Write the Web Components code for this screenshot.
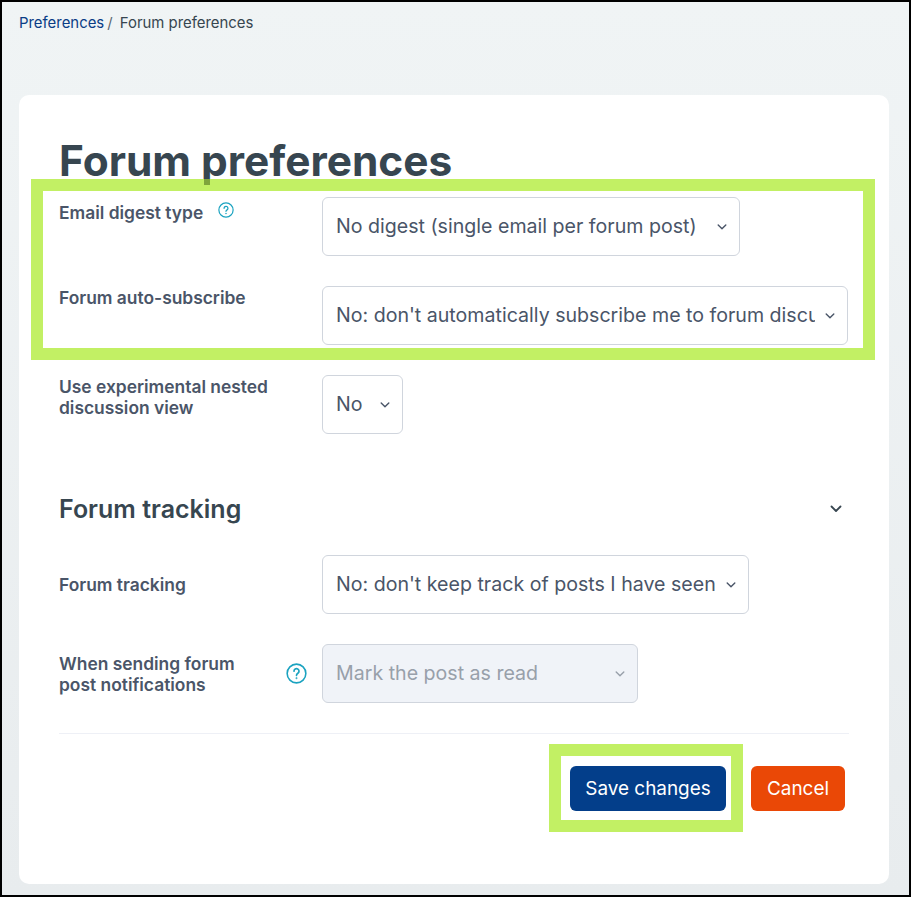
<!DOCTYPE html>
<html lang="en">
<head>
<meta charset="utf-8">
<title>Forum preferences</title>
<style>
  html, body { margin: 0; padding: 0; }
  body { font-family: Inter, "Liberation Sans", sans-serif; background: #000; }
</style>
</head>
<body>
<forum-page>
  <page-crumbs slot="crumbs"></page-crumbs>
  <h-title slot="title">Forum preferences</h-title>

  <pref-row label="Email digest type" help="small" drop>
    <pref-select width="418">No digest (single email per forum post)</pref-select>
  </pref-row>
  <pref-row label="Forum auto-subscribe">
    <pref-select width="526">No: don't automatically subscribe me to forum discussions</pref-select>
  </pref-row>
  <pref-row label="Use experimental nested discussion view">
    <pref-select width="81">No</pref-select>
  </pref-row>

  <section-head>Forum tracking</section-head>

  <pref-row label="Forum tracking" center>
    <pref-select width="427">No: don't keep track of posts I have seen</pref-select>
  </pref-row>
  <pref-row label="When sending forum post notifications" help="large" center>
    <pref-select disabled width="316">Mark the post as read</pref-select>
  </pref-row>

  <form-actions></form-actions>
</forum-page>

<script>
class ForumPage extends HTMLElement {
  constructor() {
    super();
    this.attachShadow({ mode: "open" });
    this.shadowRoot.innerHTML = `
      <style>
        :host {
          display: block;
          position: relative;
          box-sizing: border-box;
          width: 911px;
          height: 897px;
          border: 2px solid #000;
          overflow: hidden;
          background: linear-gradient(#f0f4f5, #e8ecee);
          color: #374650;
        }
        .crumbs { padding: 12px 0 0 17px; height: 93px; box-sizing: border-box; }
        .card {
          margin-left: 17px;
          width: 870px;
          height: 789px;
          box-sizing: border-box;
          background: #fff;
          border-radius: 10px;
          padding: 41px 40px 0 40px;
        }
        .mark { position: absolute; box-sizing: border-box; border: 12px solid #c2f064; }
        .one { left: 29px; top: 177px; width: 844px; height: 181px; }
        .two { left: 547px; top: 742px; width: 194px; height: 88px; }
        .title-tint {
          position: absolute;
          left: 202px; top: 177px;
          width: 6px; height: 6px;
          background: #7fa53c;
        }
      </style>
      <div class="crumbs"><slot name="crumbs"></slot></div>
      <div class="card">
        <slot name="title"></slot>
        <slot></slot>
      </div>
      <div class="mark one"></div>
      <div class="title-tint"></div>
      <div class="mark two"></div>
    `;
  }
}

class PageCrumbs extends HTMLElement {
  constructor() {
    super();
    this.attachShadow({ mode: "open" });
    this.shadowRoot.innerHTML = `
      <style>
        :host { display: block; font-size: 14.9px; line-height: 18px; color: #374650; }
        a { color: #0a3d86; text-decoration: none; }
        .sep { color: #5b6770; margin: 0 3px; }
      </style>
      <a href="#">Preferences</a><span class="sep">/</span> Forum preferences
    `;
  }
}

class HTitle extends HTMLElement {
  constructor() {
    super();
    this.attachShadow({ mode: "open" });
    this.shadowRoot.innerHTML = `
      <style>
        :host {
          display: block;
          font-size: 42.4px;
          line-height: 50px;
          font-weight: 700;
          color: #374650;
          margin-bottom: 11px;
        }
      </style>
      <slot></slot>
    `;
  }
}

class PrefRow extends HTMLElement {
  constructor() {
    super();
    this.attachShadow({ mode: "open" });
  }

  connectedCallback() {
    const help = this.getAttribute("help");
    const icon = help ? `
      <svg class="help ${help}" viewBox="0 0 20 20" fill="none" stroke="#1ba3c0" aria-hidden="true">
        <circle cx="10" cy="10" r="8.9" stroke-width="1.5"/>
        <path d="M7.6 7.8a2.4 2.4 0 1 1 3.7 2c-.8.5-1.3 1-1.3 1.9" stroke-width="1.6" stroke-linecap="round"/>
        <circle cx="10" cy="14.4" r=".7" fill="#1ba3c0" stroke-width=".5"/>
      </svg>` : "";
    this.shadowRoot.innerHTML = `
      <style>
        :host {
          display: grid;
          grid-template-columns: 263px 1fr;
          margin-bottom: 30px;
          font-size: 17.4px;
          line-height: 21px;
          font-weight: 600;
          color: #4a5568;
        }
        :host(:last-of-type) { margin-bottom: 30px; }
        .label { padding-top: 1px; display: flex; align-items: flex-start; }
        :host([drop]) .label { padding-top: 5px; }
        :host([center]) .label { align-items: center; padding-top: 0; }
        .text { width: 210px; }
        .help { flex: none; }
        .help.small { width: 16px; height: 16px; margin-left: 15px; }
        .help.large { width: 21px; height: 21px; margin-left: 17px; }
        :host([help="small"]) .text { width: auto; }
      </style>
      <div class="label"><div class="text">${this.getAttribute("label")}</div>${icon}</div>
      <div><slot></slot></div>
    `;
  }
}

class PrefSelect extends HTMLElement {
  constructor() {
    super();
    this.attachShadow({ mode: "open" });
    this.shadowRoot.innerHTML = `
      <style>
        :host {
          display: flex;
          align-items: center;
          box-sizing: border-box;
          height: 59px;
          padding: 0 12px 0 13px;
          gap: 10px;
          background: #fff;
          border: 1px solid #d0d5dd;
          border-radius: 6px;
          font-size: 19.6px;
          font-weight: 400;
          color: #4a5568;
        }
        :host([disabled]) { background: #f0f3f8; color: #98a0aa; }
        .value { flex: 1; min-width: 0; overflow: hidden; white-space: nowrap; }
        svg { flex: none; width: 10px; height: 6px; }
      </style>
      <div class="value"><slot></slot></div>
      <svg viewBox="0 0 10 6" fill="none" stroke="currentColor" stroke-width="1.4" stroke-linecap="round" stroke-linejoin="round"><path d="M1.2 1l3.8 3.8L8.8 1"/></svg>
    `;
  }

  connectedCallback() {
    this.style.width = this.getAttribute("width") + "px";
  }
}

class SectionHead extends HTMLElement {
  constructor() {
    super();
    this.attachShadow({ mode: "open" });
    this.shadowRoot.innerHTML = `
      <style>
        :host {
          display: flex;
          justify-content: space-between;
          align-items: center;
          margin: 58px 0 29px;
          font-size: 25px;
          line-height: 34px;
          font-weight: 600;
          color: #374650;
        }
        svg { width: 12px; height: 8px; margin-right: 7px; }
      </style>
      <span><slot></slot></span>
      <svg viewBox="0 0 12 8" fill="none" stroke="#374650" stroke-width="1.8" stroke-linecap="round" stroke-linejoin="round"><path d="M1.5 1.5L6 6l4.5-4.5"/></svg>
    `;
  }
}

class FormActions extends HTMLElement {
  constructor() {
    super();
    this.attachShadow({ mode: "open" });
    this.shadowRoot.innerHTML = `
      <style>
        :host {
          display: flex;
          justify-content: flex-end;
          gap: 25px;
          border-top: 1px solid #eef0f6;
          padding: 32px 4px 0 0;
        }
        button {
          height: 45px;
          border: 0;
          border-radius: 6px;
          padding: 0;
          font: 400 18.9px Inter, "Liberation Sans", sans-serif;
          color: #fff;
        }
        .save { background: #033e8a; width: 156px; }
        .cancel { background: #ea4806; width: 94px; }
      </style>
      <button class="save">Save changes</button>
      <button class="cancel">Cancel</button>
    `;
  }
}

customElements.define("forum-page", ForumPage);
customElements.define("page-crumbs", PageCrumbs);
customElements.define("h-title", HTitle);
customElements.define("pref-row", PrefRow);
customElements.define("pref-select", PrefSelect);
customElements.define("section-head", SectionHead);
customElements.define("form-actions", FormActions);
</script>
</body>
</html>
